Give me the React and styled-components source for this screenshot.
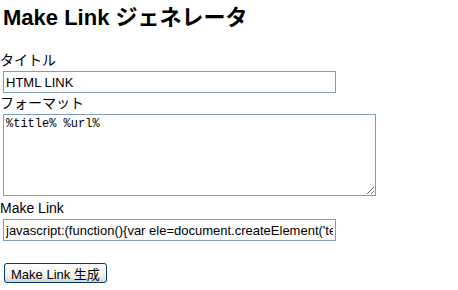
import React from "react";
import styled, { createGlobalStyle } from "styled-components";

const GlobalStyle = createGlobalStyle`
  body {
    margin: 0;
    background: #ffffff;
    color: #000000;
    font-family: "Liberation Sans", "Noto Sans CJK JP", sans-serif;
  }
`;

const Page = styled.div`
  display: flex;
  flex-direction: column;
  align-items: flex-start;
`;

const Title = styled.h1`
  margin: 6px 0 20px 3px;
  font-size: 22px;
  line-height: 24px;
  font-weight: bold;
`;

const Label = styled.label`
  display: block;
  font-size: 14px;
  line-height: 20px;
`;

const TextInput = styled.input`
  box-sizing: border-box;
  width: ${(p) => p.$width}px;
  height: 22px;
  margin: 1px 0 0 3px;
  padding: 1px 2px;
  border: 1px solid #7f9db9;
  font-family: "Liberation Sans", "Noto Sans CJK JP", sans-serif;
  font-size: 13px;
  color: #000;
  outline: none;
`;

const Format = styled.textarea`
  box-sizing: border-box;
  width: 373px;
  height: 82px;
  margin: 1px 0 2px 3px;
  padding: 2px;
  border: 1px solid #7f9db9;
  font-family: "Liberation Mono", monospace;
  font-size: 12px;
  line-height: 14px;
  color: #000;
  outline: none;
`;

const MakeButton = styled.button`
  margin: 22px 0 0 4px;
  height: 20px;
  padding: 0 6px;
  border: 1px solid #003c74;
  border-radius: 3px;
  background: linear-gradient(#ffffff, #f0f0ea 70%, #d6d0c5);
  font-family: "Liberation Sans", "Noto Sans CJK JP", sans-serif;
  font-size: 13px;
  color: #000;
`;

const bookmarklet =
  "javascript:(function(){var ele=document.createElement('textarea');ele.value='%title% %url%';})()";

export default function App() {
  return (
    <Page>
      <GlobalStyle />
      <Title>Make Link ジェネレータ</Title>
      <Label>タイトル</Label>
      <TextInput $width={333} defaultValue="HTML LINK" />
      <Label>フォーマット</Label>
      <Format defaultValue="%title% %url%" />
      <Label>Make Link</Label>
      <TextInput $width={333} defaultValue={bookmarklet} />
      <MakeButton>Make Link 生成</MakeButton>
    </Page>
  );
}
